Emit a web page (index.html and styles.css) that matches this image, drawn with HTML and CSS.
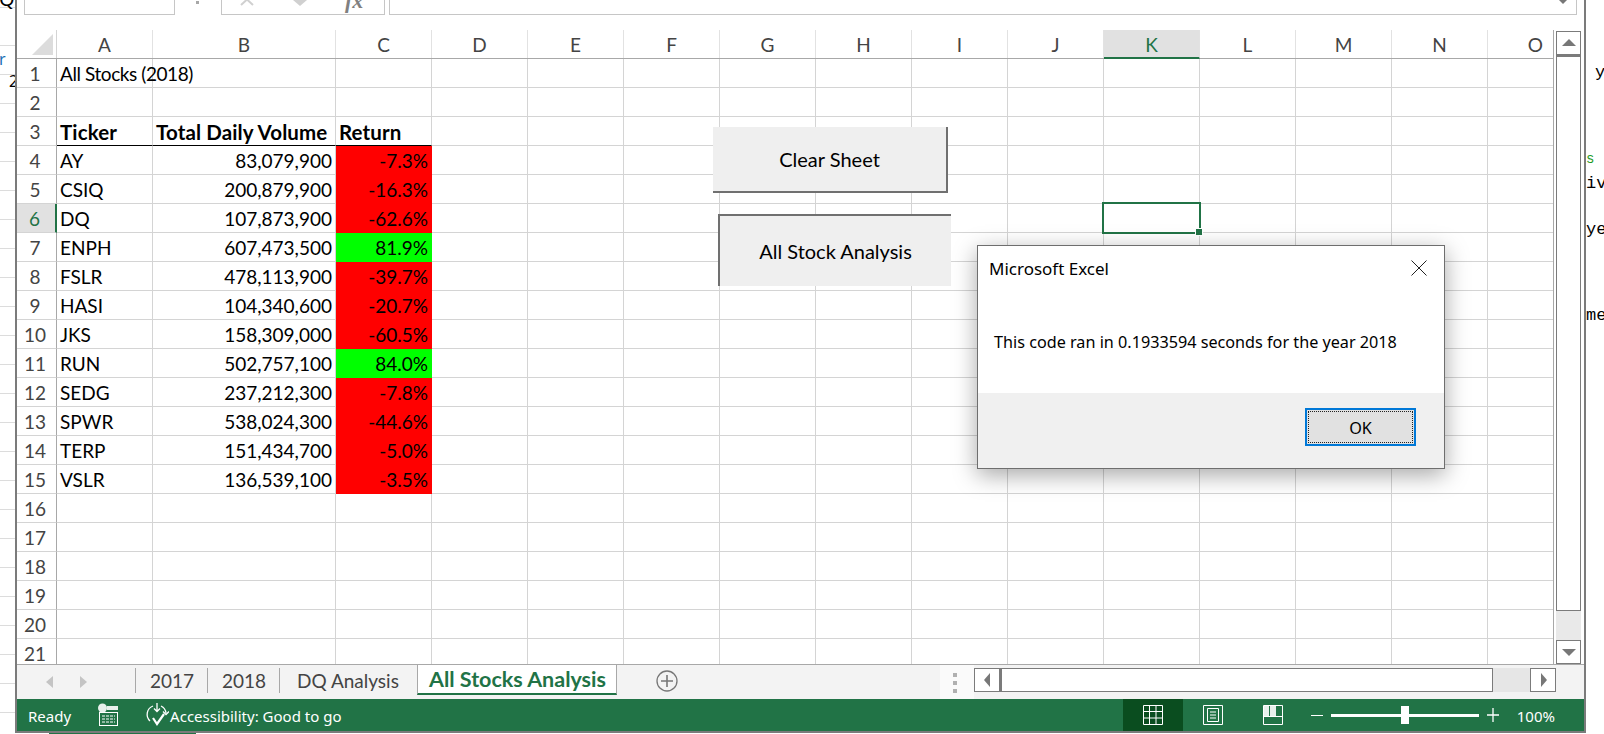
FILE: index.html
```html
<!DOCTYPE html>
<html lang="en">
<head>
    <meta charset="UTF-8">
    <title>All Stocks Analysis - Excel</title>
    <link rel="stylesheet" href="styles.css">
</head>
<body>
    <div class="behind-left">
        <span class="qc">QC</span>
        <span class="blue-r">r</span>
        <span class="two">2</span>
    </div>

    <main class="window">
        <div class="formula-bar">
            <div class="name-box"></div>
            <div class="dots"><span class="dot"></span></div>
            <div class="fx-box">
                <svg class="fx-x" width="20" height="6" viewBox="0 0 20 6"><path d="M4 -6 L16 5 M16 -6 L4 5" stroke="#d0d0d0" stroke-width="2" fill="none"/></svg>
                <svg class="fx-check" width="14" height="7" viewBox="0 0 14 7"><polygon points="0,0 14,0 7,6" fill="#d0d0d0"/></svg>
                <span class="fx">fx</span>
            </div>
            <div class="formula-input"><span class="chevron"></span></div>
        </div>

        <div class="sheet-area">
            <div class="sheet">
                <div class="col-heads">
                    <div class="corner"><svg width="21" height="21" viewBox="0 0 21 21"><polygon points="21,0 21,21 0,21" fill="#dcdcdc"/></svg></div>
                    <div class="head col-a">A</div>
                    <div class="head col-b">B</div>
                    <div class="head col-c">C</div>
                    <div class="head">D</div>
                    <div class="head">E</div>
                    <div class="head">F</div>
                    <div class="head">G</div>
                    <div class="head">H</div>
                    <div class="head">I</div>
                    <div class="head">J</div>
                    <div class="head head-on">K</div>
                    <div class="head">L</div>
                    <div class="head">M</div>
                    <div class="head">N</div>
                    <div class="head col-o">O</div>
                </div>

                <div class="row"><div class="num">1</div><div class="cell col-a wide">All Stocks (2018)</div><div class="cell col-b"></div><div class="cell col-c"></div><div class="blank"></div></div>
                <div class="row"><div class="num">2</div><div class="cell col-a"></div><div class="cell col-b"></div><div class="cell col-c"></div><div class="blank"></div></div>
                <div class="row row-title"><div class="num">3</div><div class="cell col-a">Ticker</div><div class="cell col-b">Total Daily Volume</div><div class="cell col-c">Return</div><div class="blank"></div></div>
                <div class="row"><div class="num">4</div><div class="cell col-a">AY</div><div class="cell col-b amount">83,079,900</div><div class="cell col-c amount loss">-7.3%</div><div class="blank"></div></div>
                <div class="row"><div class="num">5</div><div class="cell col-a">CSIQ</div><div class="cell col-b amount">200,879,900</div><div class="cell col-c amount loss">-16.3%</div><div class="blank"></div></div>
                <div class="row"><div class="num num-on">6</div><div class="cell col-a">DQ</div><div class="cell col-b amount">107,873,900</div><div class="cell col-c amount loss">-62.6%</div><div class="blank"></div></div>
                <div class="row"><div class="num">7</div><div class="cell col-a">ENPH</div><div class="cell col-b amount">607,473,500</div><div class="cell col-c amount gain">81.9%</div><div class="blank"></div></div>
                <div class="row"><div class="num">8</div><div class="cell col-a">FSLR</div><div class="cell col-b amount">478,113,900</div><div class="cell col-c amount loss">-39.7%</div><div class="blank"></div></div>
                <div class="row"><div class="num">9</div><div class="cell col-a">HASI</div><div class="cell col-b amount">104,340,600</div><div class="cell col-c amount loss">-20.7%</div><div class="blank"></div></div>
                <div class="row"><div class="num">10</div><div class="cell col-a">JKS</div><div class="cell col-b amount">158,309,000</div><div class="cell col-c amount loss">-60.5%</div><div class="blank"></div></div>
                <div class="row"><div class="num">11</div><div class="cell col-a">RUN</div><div class="cell col-b amount">502,757,100</div><div class="cell col-c amount gain">84.0%</div><div class="blank"></div></div>
                <div class="row"><div class="num">12</div><div class="cell col-a">SEDG</div><div class="cell col-b amount">237,212,300</div><div class="cell col-c amount loss">-7.8%</div><div class="blank"></div></div>
                <div class="row"><div class="num">13</div><div class="cell col-a">SPWR</div><div class="cell col-b amount">538,024,300</div><div class="cell col-c amount loss">-44.6%</div><div class="blank"></div></div>
                <div class="row"><div class="num">14</div><div class="cell col-a">TERP</div><div class="cell col-b amount">151,434,700</div><div class="cell col-c amount loss">-5.0%</div><div class="blank"></div></div>
                <div class="row"><div class="num">15</div><div class="cell col-a">VSLR</div><div class="cell col-b amount">136,539,100</div><div class="cell col-c amount loss">-3.5%</div><div class="blank"></div></div>
                <div class="row"><div class="num">16</div><div class="cell col-a"></div><div class="cell col-b"></div><div class="cell col-c"></div><div class="blank"></div></div>
                <div class="row"><div class="num">17</div><div class="cell col-a"></div><div class="cell col-b"></div><div class="cell col-c"></div><div class="blank"></div></div>
                <div class="row"><div class="num">18</div><div class="cell col-a"></div><div class="cell col-b"></div><div class="cell col-c"></div><div class="blank"></div></div>
                <div class="row"><div class="num">19</div><div class="cell col-a"></div><div class="cell col-b"></div><div class="cell col-c"></div><div class="blank"></div></div>
                <div class="row"><div class="num">20</div><div class="cell col-a"></div><div class="cell col-b"></div><div class="cell col-c"></div><div class="blank"></div></div>
                <div class="row"><div class="num">21</div><div class="cell col-a"></div><div class="cell col-b"></div><div class="cell col-c"></div><div class="blank"></div></div>

                <!-- things floating over the cells -->
                <div class="macro-btn btn-clear">Clear Sheet</div>
                <div class="macro-btn btn-analysis">All Stock Analysis</div>
                <div class="selected-cell"><span class="fill-handle"></span></div>
            </div>

            <div class="v-scroll">
                <div class="arrow-btn up"><svg width="16" height="10" viewBox="0 0 16 10"><polygon points="8,1 15,8 1,8" fill="#777"/></svg></div>
                <div class="v-thumb"></div>
                <div class="v-track"></div>
                <div class="arrow-btn down"><svg width="16" height="10" viewBox="0 0 16 10"><polygon points="8,9 15,2 1,2" fill="#777"/></svg></div>
            </div>
        </div>

        <div class="tab-bar">
            <div class="tab-nav">
                <svg width="7" height="12" viewBox="0 0 7 12"><polygon points="7,0 7,12 0,6" fill="#c4c4c4"/></svg>
                <svg width="7" height="12" viewBox="0 0 7 12"><polygon points="0,0 0,12 7,6" fill="#c4c4c4"/></svg>
            </div>
            <div class="tab">2017</div>
            <div class="tab">2018</div>
            <div class="tab tab-plain">DQ Analysis</div>
            <div class="tab tab-active">All Stocks Analysis</div>
            <div class="tab-add"><svg width="24" height="24" viewBox="0 0 24 24"><circle cx="12" cy="12" r="10" fill="none" stroke="#777" stroke-width="1.3"/><path d="M12 6V18M6 12H18" stroke="#777" stroke-width="1.6"/></svg></div>
            <div class="split-dots"><svg width="4" height="20" viewBox="0 0 4 20"><path d="M0 0H4V4H0ZM0 8H4V12H0ZM0 16H4V20H0Z" fill="#b0b0b0"/></svg></div>
            <div class="h-scroll">
                <div class="arrow-btn"><svg width="7" height="14" viewBox="0 0 7 14"><polygon points="6,0 6,14 0,7" fill="#777"/></svg></div>
                <div class="h-thumb"></div>
                <div class="h-track"></div>
                <div class="arrow-btn"><svg width="7" height="14" viewBox="0 0 7 14"><polygon points="1,0 1,14 7,7" fill="#777"/></svg></div>
            </div>
        </div>

        <div class="status-bar">
            <span class="ready">Ready</span>
            <svg class="macro-icon" width="21" height="24" viewBox="0 0 21 24">
                <circle cx="5.5" cy="5" r="4.5" fill="#e8f0ec"/>
                <rect x="10" y="3" width="11" height="4" fill="#e8f0ec"/>
                <rect x="2.5" y="9.5" width="18" height="13" fill="none" stroke="#fff"/>
                <path d="M5 13H18M5 16H18M5 19H18" stroke="#fff" stroke-dasharray="3 1" fill="none"/>
            </svg>
            <svg class="access-icon" width="24" height="26" viewBox="0 0 24 26">
                <path d="M8 4 A9 9 0 0 0 5 19" stroke="#fff" fill="none" stroke-width="1.3"/>
                <path d="M16 4 A9 9 0 0 1 21 11" stroke="#fff" fill="none" stroke-width="1.3"/>
                <path d="M12 1V9M9 6.5L12 9.5L15 6.5M18 9.5L21 12.5L24 9.5" stroke="#fff" fill="none" stroke-width="1.3"/>
                <path d="M8 16L12 22L19 12" stroke="#fff" fill="none" stroke-width="2.2"/>
            </svg>
            <span class="access-text">Accessibility: Good to go</span>
            <div class="status-right">
                <div class="view-btn view-on">
                    <svg width="20" height="20" viewBox="0 0 20 20"><path d="M.5.5H19.5V19.5H.5ZM.5 6.5H19.5M.5 13H19.5M6.5.5V19.5M13 .5V19.5" stroke="#fff" fill="none"/></svg>
                </div>
                <div class="view-btn">
                    <svg width="20" height="20" viewBox="0 0 20 20"><path d="M.5.5H19.5V19.5H.5ZM4.5 3.5H15.5V16.5H4.5ZM7 7H13M7 10H13M7 13H13" stroke="#fff" fill="none"/></svg>
                </div>
                <div class="view-btn">
                    <svg width="20" height="20" viewBox="0 0 20 20"><rect x="1" y="1" width="5" height="10" fill="#e8f0ec"/><rect x="7" y="1" width="6" height="10" fill="#e8f0ec"/><path d="M.5.5H19.5V19.5H.5ZM.5 11.5H19.5" stroke="#fff" fill="none"/></svg>
                </div>
                <div class="zoom-minus"></div>
                <div class="zoom-slider"><span class="zoom-thumb"></span></div>
                <svg class="zoom-plus" width="12" height="14" viewBox="0 0 12 14"><path d="M0 7H12M6 0V14" stroke="#fff" stroke-width="1.3"/></svg>
                <span class="zoom-pct">100%</span>
            </div>
        </div>

        <div class="dialog">
            <div class="dialog-title">
                <span>Microsoft Excel</span>
                <svg width="16" height="16" viewBox="0 0 16 16"><path d="M.5.5L15.5 15.5M15.5.5L.5 15.5" stroke="#222" fill="none"/></svg>
            </div>
            <div class="dialog-msg">This code ran in 0.1933594 seconds for the year 2018</div>
            <div class="dialog-foot"><div class="ok-btn"><span class="ok-inner">OK</span></div></div>
        </div>

        <span class="peek-green"></span>
    </main>

    <div class="behind-right">
        <span class="code-y">y</span>
        <span class="code-s">s</span>
        <span class="code-iv">iv</span>
        <span class="code-ye">ye</span>
        <span class="code-me">me</span>
    </div>
</body>
</html>
```

FILE: styles.css
```css
* {
    box-sizing: border-box;
}

body {
    margin: 0;
    width: 1604px;
    height: 734px;
    overflow: hidden;
    display: flex;
    background-color: white;
    color: #000;
    font-family: Lato, sans-serif;
}

/* other windows peeking out on both sides */
.behind-left {
    width: 15px;
    height: 734px;
    display: flex;
    flex-direction: column;
    overflow: hidden;
    font-family: "Noto Sans", sans-serif;
    font-size: 20px;
    line-height: 20px;
    background-image: repeating-linear-gradient(to bottom, transparent 0, transparent 28px, #dcdcdc 28px, #dcdcdc 29px);
    background-position: 0 17px;
}

.qc {
    margin: -11px 0 0 -1px;
    white-space: nowrap;
}

.blue-r {
    margin: 40px 0 0 -1px;
    color: #1a6fb5;
    font-size: 16px;
}

.two {
    margin: 2px 0 0 9px;
    font-size: 16px;
}

.behind-right {
    width: 18px;
    height: 734px;
    display: flex;
    flex-direction: column;
    overflow: hidden;
    font-family: "Liberation Mono", monospace;
    font-size: 17px;
    line-height: 20px;
    white-space: nowrap;
}

.code-y {
    margin: 63px 0 0 9px;
}

.code-s {
    margin-top: 67px;
    color: #1d9a1d;
    font-size: 14px;
    line-height: 18px;
}

.code-iv {
    margin-top: 6px;
}

.code-ye {
    margin-top: 26px;
}

.code-me {
    margin-top: 66px;
}

/* excel window */
.window {
    position: relative;
    width: 1571px;
    height: 733px;
    display: flex;
    flex-direction: column;
    border-left: 2px solid #7b7b7b;
    border-right: 2px solid #7b7b7b;
    border-bottom: 2px solid #7b7b7b;
    background-color: white;
}

.peek-green {
    position: absolute;
    left: 32px;
    bottom: -3px;
    width: 147px;
    height: 1px;
    background-color: #217346;
}

.formula-bar {
    height: 30px;
    display: flex;
    align-items: flex-start;
    padding-left: 7px;
    flex-shrink: 0;
}

.name-box, .fx-box, .formula-input {
    height: 15px;
    background-color: white;
    border: 1px solid #c6c6c6;
    border-top: none;
}

.name-box {
    width: 151px;
}

.dots {
    width: 46px;
    padding: 1px 0 0 21px;
}

.dot {
    display: block;
    width: 3px;
    height: 3px;
    background-color: #a8a8a8;
}

.fx-box {
    width: 164px;
    display: flex;
    align-items: flex-start;
    padding-left: 15px;
    overflow: hidden;
}

.fx-check {
    margin-left: 36px;
}

.fx {
    font-family: "Liberation Serif", serif;
    font-style: italic;
    font-weight: bold;
    font-size: 22px;
    line-height: 0;
    padding-top: 1px;
    color: #808080;
    margin-left: 38px;
}

.formula-input {
    width: 1188px;
    margin-left: 4px;
    position: relative;
}

.chevron {
    position: absolute;
    right: 9px;
    top: 0;
    border-left: 4px solid transparent;
    border-right: 4px solid transparent;
    border-top: 4px solid #777;
}

.sheet-area {
    height: 634px;
    display: flex;
    flex-shrink: 0;
}

.sheet {
    position: relative;
    width: 1537px;
    height: 634px;
    overflow: hidden;
    border-right: 1px solid #a8a8a8;
}

.col-heads, .row {
    display: flex;
    height: 29px;
}

.col-heads {
    border-bottom: 1px solid #a8a8a8;
}

.corner {
    width: 40px;
    padding: 4px 0 0 15px;
    border-right: 1px solid #d4d4d4;
}

.corner svg {
    display: block;
}

.head {
    width: 96px;
    height: 28px;
    text-align: center;
    color: #444;
    font-size: 19px;
    line-height: 30px;
    border-right: 1px solid #e2e2e2;
}

.head-on {
    background-color: #e1e1e1;
    color: #217346;
    height: 29px;
    border-bottom: 2px solid #217346;
}

.col-o {
    width: 65px;
    border-right: none;
    text-align: right;
    padding-right: 10px;
}

.num {
    width: 40px;
    text-align: center;
    padding-right: 3px;
    color: #444;
    font-size: 19px;
    line-height: 30px;
    border-right: 1px solid #a8a8a8;
    border-bottom: 1px solid #d4d4d4;
}

.num-on {
    background-color: #e1e1e1;
    color: #217346;
    border-right: 2px solid #217346;
}

.cell {
    padding: 0 3px;
    font-size: 19px;
    line-height: 30px;
    white-space: nowrap;
    border-right: 1px solid #d4d4d4;
    border-bottom: 1px solid #d4d4d4;
}

.col-a, .col-c {
    width: 96px;
}

.col-b {
    width: 183px;
}

.wide {
    letter-spacing: -0.42px;
}

.amount {
    text-align: right;
}

.loss {
    background-color: #ff0000;
    border-color: #ff0000;
}

.gain {
    background-color: #00ff00;
    border-color: #00ff00;
}

.row-title .cell {
    font-size: 20.5px;
    font-weight: bold;
    letter-spacing: 0.12px;
    border-bottom: 1px solid #000;
}

.blank {
    flex: 1;
    border-bottom: 1px solid #d4d4d4;
    background-image: repeating-linear-gradient(to right, transparent 0, transparent 95px, #d4d4d4 95px, #d4d4d4 96px);
}

/* buttons drawn over the cells */
.macro-btn {
    position: absolute;
    display: flex;
    align-items: center;
    justify-content: center;
    background-color: #efefef;
    font-size: 20px;
}

.btn-clear {
    left: 696px;
    top: 97px;
    width: 235px;
    height: 66px;
    border-right: 2px solid #707070;
    border-bottom: 2px solid #707070;
}

.btn-analysis {
    left: 701px;
    top: 184px;
    width: 233px;
    height: 72px;
    border-left: 2px solid #707070;
    border-top: 2px solid #707070;
}

.selected-cell {
    position: absolute;
    left: 1085px;
    top: 172px;
    width: 99px;
    height: 32px;
    border: 2px solid #217346;
}

.fill-handle {
    position: absolute;
    right: -3px;
    bottom: -3px;
    width: 6px;
    height: 6px;
    background-color: #217346;
    outline: 1px solid white;
}

/* scrollbars */
.arrow-btn {
    display: flex;
    align-items: center;
    justify-content: center;
    flex-shrink: 0;
    background-color: white;
    border: 1px solid #7b7b7b;
}

.v-scroll {
    width: 25px;
    margin: 1px 0 0 2px;
    display: flex;
    flex-direction: column;
}

.v-scroll .arrow-btn {
    height: 24px;
}

.v-thumb {
    height: 556px;
    background-color: white;
    border: 1px solid #7b7b7b;
    border-top-width: 2px;
}

.v-track {
    flex: 1;
    background-color: #e9e9e9;
}

.tab-bar {
    height: 35px;
    flex-shrink: 0;
    display: flex;
    align-items: flex-start;
    background-color: #f3f3f3;
    border-top: 1px solid #a8a8a8;
}

.tab-nav {
    width: 118px;
    height: 33px;
    display: flex;
    align-items: center;
    gap: 27px;
    padding-left: 29px;
}

.tab {
    width: 72px;
    height: 25px;
    margin-top: 3px;
    padding-left: 14px;
    color: #444;
    font-size: 19px;
    line-height: 25px;
    white-space: nowrap;
    border-left: 1px solid #a8a8a8;
}

.tab-plain {
    width: 138px;
    padding-left: 17px;
}

.tab-active {
    width: 200px;
    height: 31px;
    margin-top: -1px;
    padding-left: 11px;
    background-color: white;
    color: #217346;
    font-size: 21.5px;
    font-weight: bold;
    line-height: 29px;
    border: 1px solid #a8a8a8;
    border-bottom: 2px solid #217346;
}

.tab-add {
    width: 100px;
    padding: 4px 0 0 38px;
}

.split-dots {
    width: 34px;
    height: 34px;
    margin-left: 223px;
    padding: 8px 0 0 13px;
    background-color: #fafafa;
}

.split-dots svg, .tab-add svg {
    display: block;
}

.h-scroll {
    width: 582px;
    height: 24px;
    margin-top: 3px;
    display: flex;
}

.h-scroll .arrow-btn {
    width: 26px;
}

.h-thumb {
    width: 493px;
    background-color: white;
    border: 1px solid #7b7b7b;
    border-left-width: 2px;
}

.h-track {
    flex: 1;
    background-color: #e6e6e6;
}

.status-bar {
    height: 32px;
    flex-shrink: 0;
    display: flex;
    align-items: center;
    background-color: #217346;
    color: white;
    font-family: "Noto Sans", sans-serif;
    font-size: 15px;
}

.ready {
    margin: 2px 0 0 11px;
}

.macro-icon {
    margin-left: 26px;
}

.access-icon {
    margin-left: 27px;
}

.access-text {
    margin: 2px 0 0 1px;
}

.status-right {
    margin-left: auto;
    display: flex;
    align-items: center;
    height: 100%;
}

.view-btn {
    width: 60px;
    height: 100%;
    display: flex;
    align-items: center;
    justify-content: center;
}

.view-on {
    background-color: #0a4d1f;
}

.zoom-minus {
    width: 12px;
    height: 1px;
    margin-left: 8px;
    background-color: white;
}

.zoom-slider {
    position: relative;
    width: 148px;
    height: 3px;
    margin-left: 8px;
    background-color: white;
}

.zoom-thumb {
    position: absolute;
    left: 70px;
    top: -8px;
    width: 8px;
    height: 18px;
    background-color: white;
}

.zoom-plus {
    margin-left: 8px;
}

.zoom-pct {
    margin: 2px 29px 0 18px;
}

/* message box */
.dialog {
    position: absolute;
    left: 960px;
    top: 245px;
    width: 468px;
    height: 224px;
    display: flex;
    flex-direction: column;
    background-color: white;
    border: 1px solid #6e6e6e;
    box-shadow: 0 6px 22px rgba(0, 0, 0, 0.35);
    font-family: "Noto Sans", sans-serif;
    font-size: 16.2px;
}

.dialog-title {
    height: 42px;
    display: flex;
    justify-content: space-between;
    align-items: center;
    padding: 0 17px 0 11px;
    margin-top: 1px;
    font-size: 17px;
}

.dialog-msg {
    flex: 1;
    padding: 42px 16px 0;
}

.dialog-foot {
    height: 75px;
    display: flex;
    justify-content: flex-end;
    background-color: #f0f0f0;
    padding: 15px 28px 0 0;
}

.ok-btn {
    width: 111px;
    height: 38px;
    padding: 1px;
    background-color: #e1e1e1;
    border: 2px solid #0078d7;
}

.ok-inner {
    display: block;
    height: 100%;
    text-align: center;
    line-height: 33px;
    border: 1px dotted #222;
}
```
